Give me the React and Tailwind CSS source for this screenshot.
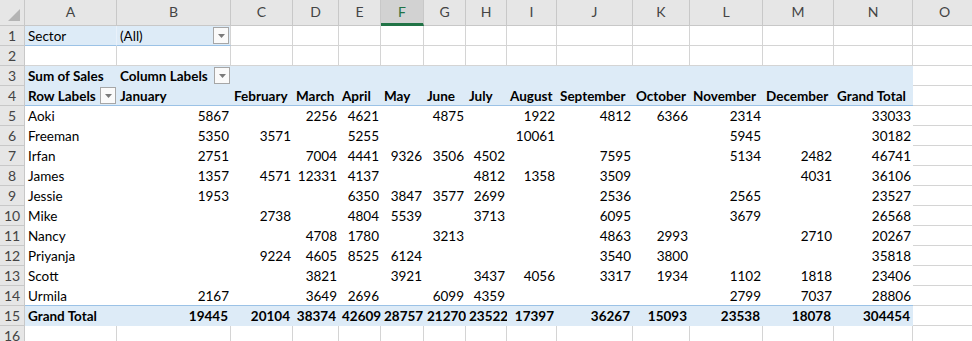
import React from "react";

const letters = ["A", "B", "C", "D", "E", "F", "G", "H", "I", "J", "K", "L", "M", "N", "O"];
const months = ["January", "February", "March", "April", "May", "June", "July", "August", "September", "October", "November", "December", "Grand Total"];

// [name, Jan..Dec, Grand Total] — blanks are null
const data = [
  ["Aoki", 5867, null, 2256, 4621, null, 4875, null, 1922, 4812, 6366, 2314, null, 33033],
  ["Freeman", 5350, 3571, null, 5255, null, null, null, 10061, null, null, 5945, null, 30182],
  ["Irfan", 2751, null, 7004, 4441, 9326, 3506, 4502, null, 7595, null, 5134, 2482, 46741],
  ["James", 1357, 4571, 12331, 4137, null, null, 4812, 1358, 3509, null, null, 4031, 36106],
  ["Jessie", 1953, null, null, 6350, 3847, 3577, 2699, null, 2536, null, 2565, null, 23527],
  ["Mike", null, 2738, null, 4804, 5539, null, 3713, null, 6095, null, 3679, null, 26568],
  ["Nancy", null, null, 4708, 1780, null, 3213, null, null, 4863, 2993, null, 2710, 20267],
  ["Priyanja", null, 9224, 4605, 8525, 6124, null, null, null, 3540, 3800, null, null, 35818],
  ["Scott", null, null, 3821, null, 3921, null, 3437, 4056, 3317, 1934, 1102, 1818, 23406],
  ["Urmila", 2167, null, 3649, 2696, null, 6099, 4359, null, null, null, 2799, 7037, 28806],
];
const totals = [19445, 20104, 38374, 42609, 28757, 21270, 23522, 17397, 36267, 15093, 23538, 18078, 304454];

function DropBtn() {
  return (
    <span className="absolute right-[1px] top-[1px] w-[16px] h-[17px] border border-[#a6a6a6] bg-[#fafafa] flex items-center justify-center">
      <svg width="7" height="4" viewBox="0 0 7 4">
        <path d="M0 0h7L3.5 4z" fill="#7a7a7a" />
      </svg>
    </span>
  );
}

function Grid({ children, className = "" }) {
  return (
    <div className={`relative h-[20px] border-r border-b border-[#d4d4d4] bg-white leading-[20px] px-[3px] whitespace-nowrap ${className}`}>
      {children}
    </div>
  );
}

function Band({ children, className = "" }) {
  return (
    <div className={`relative h-[20px] bg-[#ddebf7] leading-[20px] px-[3px] whitespace-nowrap font-bold ${className}`}>
      {children}
    </div>
  );
}

function RowHead({ n }) {
  return (
    <div className="h-[20px] bg-[#e6e6e6] border-r border-b border-[#c8c8c8] text-[#444] text-[14px] text-center leading-[20px]">{n}</div>
  );
}

export default function App() {
  const cells = [];

  // column header row
  cells.push(
    <div key="corner" className="relative h-[26px] bg-[#e6e6e6] border-r border-b border-[#c8c8c8]">
      <span className="absolute right-[4px] bottom-[4px] w-0 h-0 border-l-[12px] border-l-transparent border-b-[12px] border-b-[#b4b4b4]" />
    </div>
  );
  letters.forEach((l) =>
    cells.push(
      l === "F" ? (
        <div key={"h" + l} className="h-[26px] bg-[#d2d2d2] border-r border-[#c8c8c8] border-b-[3px] border-b-[#217346] text-[#217346] text-[14px] text-center leading-[24px]">{l}</div>
      ) : (
        <div key={"h" + l} className="h-[26px] bg-[#e6e6e6] border-r border-b border-[#c8c8c8] text-[#444] text-[14px] text-center leading-[24px]">{l}</div>
      )
    )
  );

  // row 1: report filter
  cells.push(<RowHead key="r1" n={1} />);
  cells.push(
    <div key="1A" className="h-[20px] bg-[#ddebf7] border-r border-r-[#e9f1fa] border-b border-b-[#9bc2e6] leading-[20px] px-[3px]">Sector</div>
  );
  cells.push(
    <div key="1B" className="relative h-[20px] bg-[#ddebf7] border-r border-r-[#d4d4d4] border-b border-b-[#9bc2e6] leading-[20px] px-[3px]">
      (All)
      <DropBtn />
    </div>
  );
  for (let c = 2; c < 15; c++) cells.push(<Grid key={"1" + c} />);

  // row 2: empty
  cells.push(<RowHead key="r2" n={2} />);
  for (let c = 0; c < 15; c++) cells.push(<Grid key={"2" + c} />);

  // row 3
  cells.push(<RowHead key="r3" n={3} />);
  cells.push(<Band key="3A">Sum of Sales</Band>);
  cells.push(
    <Band key="3B">
      Column Labels
      <DropBtn />
    </Band>
  );
  for (let c = 2; c < 14; c++) cells.push(<Band key={"3" + c} />);
  cells.push(<Grid key="3O" />);

  // row 4
  cells.push(<RowHead key="r4" n={4} />);
  cells.push(
    <Band key="4A" className="border-b border-[#9bc2e6]">
      Row Labels
      <DropBtn />
    </Band>
  );
  months.forEach((m) =>
    cells.push(
      <Band key={"4" + m} className="border-b border-[#9bc2e6]">
        {m}
      </Band>
    )
  );
  cells.push(<Grid key="4O" />);

  // body rows
  data.forEach((row, i) => {
    const last = i === data.length - 1;
    const line = last ? "border-b border-[#9bc2e6]" : "";
    cells.push(<RowHead key={"r" + (i + 5)} n={i + 5} />);
    cells.push(
      <div key={"n" + i} className={`h-[20px] bg-white leading-[20px] px-[3px] whitespace-nowrap ${line}`}>
        {row[0]}
      </div>
    );
    row.slice(1).forEach((v, j) =>
      cells.push(
        <div key={i + "-" + j} className={`h-[20px] bg-white leading-[20px] px-[2px] text-right ${line}`}>
          {v ?? ""}
        </div>
      )
    );
    cells.push(<Grid key={"o" + i} />);
  });

  // row 15: grand total
  cells.push(<RowHead key="r15" n={15} />);
  cells.push(<Band key="15A">Grand Total</Band>);
  totals.forEach((t, j) =>
    cells.push(
      <Band key={"t" + j} className="text-right px-[2px]">
        {t}
      </Band>
    )
  );
  cells.push(<Grid key="15O" />);

  // row 16
  cells.push(<RowHead key="r16" n={16} />);
  for (let c = 0; c < 15; c++) cells.push(<Grid key={"16" + c} />);

  return (
    <div className="w-[972px] h-[341px] overflow-hidden bg-white text-black text-[13.5px]" style={{ fontFamily: "Lato, 'Open Sans', sans-serif" }}>
      <div className="grid grid-cols-[25px_92px_114px_62px_46px_42px_43px_42px_41px_50px_76px_57px_73px_71px_79px_64px] w-[977px]">
        {cells}
      </div>
    </div>
  );
}
